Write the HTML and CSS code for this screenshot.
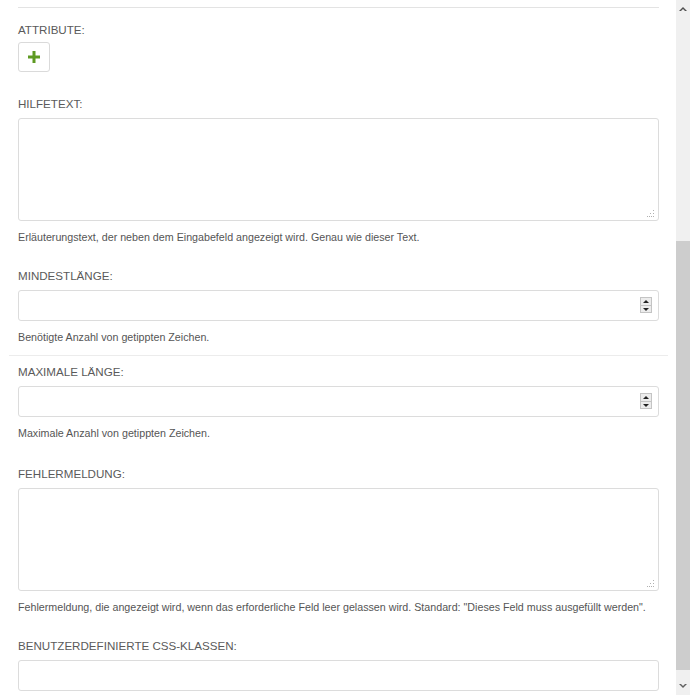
FILE: index.html
```html
<!DOCTYPE html>
<html lang="de">
<head>
<meta charset="utf-8">
<title>Feld-Einstellungen</title>
<link rel="stylesheet" href="styles.css">
</head>
<body>
<div class="page">
  <div class="form">
    <hr class="rule-top">
    <div class="field field-attr">
      <label class="lbl lbl-tight">ATTRIBUTE:</label>
      <button class="add-btn" type="button" aria-label="Hinzufügen">
        <svg width="12" height="12" viewBox="0 0 12 12"><path d="M4.5 0h3v4.5H12v3H7.5V12h-3V7.5H0v-3h4.5z" fill="#5e9a22"/></svg>
      </button>
    </div>
    <div class="field">
      <label class="lbl">HILFETEXT:</label>
      <div class="ctl-wrap">
        <textarea class="ctl area"></textarea>
        <svg class="grip" width="8" height="8" viewBox="0 0 8 8"><g fill="#b0b0b0"><rect x="6" y="0" width="1" height="1"/><rect x="6" y="3" width="1" height="1"/><rect x="3" y="3" width="1" height="1"/><rect x="0" y="6" width="1" height="1"/><rect x="2" y="6" width="1" height="1"/><rect x="4" y="6" width="1" height="1"/><rect x="6" y="6" width="1" height="1"/></g></svg>
      </div>
      <p class="help">Erläuterungstext, der neben dem Eingabefeld angezeigt wird. Genau wie dieser Text.</p>
    </div>
    <div class="field field-last">
      <label class="lbl">MINDESTLÄNGE:</label>
      <div class="ctl-wrap">
        <input class="ctl inp" type="text">
        <span class="spin"><span class="spin-up"></span><span class="spin-dn"></span></span>
      </div>
      <p class="help">Benötigte Anzahl von getippten Zeichen.</p>
    </div>
    <hr class="rule-mid">
    <div class="field field-loose">
      <label class="lbl">MAXIMALE LÄNGE:</label>
      <div class="ctl-wrap">
        <input class="ctl inp" type="text">
        <span class="spin"><span class="spin-up"></span><span class="spin-dn"></span></span>
      </div>
      <p class="help">Maximale Anzahl von getippten Zeichen.</p>
    </div>
    <div class="field">
      <label class="lbl">FEHLERMELDUNG:</label>
      <div class="ctl-wrap">
        <textarea class="ctl area"></textarea>
        <svg class="grip" width="8" height="8" viewBox="0 0 8 8"><g fill="#b0b0b0"><rect x="6" y="0" width="1" height="1"/><rect x="6" y="3" width="1" height="1"/><rect x="3" y="3" width="1" height="1"/><rect x="0" y="6" width="1" height="1"/><rect x="2" y="6" width="1" height="1"/><rect x="4" y="6" width="1" height="1"/><rect x="6" y="6" width="1" height="1"/></g></svg>
      </div>
      <p class="help">Fehlermeldung, die angezeigt wird, wenn das erforderliche Feld leer gelassen wird. Standard: "Dieses Feld muss ausgefüllt werden".</p>
    </div>
    <div class="field">
      <label class="lbl">BENUTZERDEFINIERTE CSS-KLASSEN:</label>
      <div class="ctl-wrap">
        <input class="ctl inp" type="text">
      </div>
    </div>
  </div>
  <div class="scrollbar">
    <div class="sb-btn sb-up"><svg width="8" height="5" viewBox="0 0 8 5"><path d="M0 5L4 1 8 5H6L4 3 2 5z" fill="#505050"/></svg></div>
    <div class="sb-track"><div class="sb-thumb"></div></div>
    <div class="sb-btn sb-dn"><svg width="8" height="5" viewBox="0 0 8 5"><path d="M0 0L4 4 8 0H6L4 2 2 0z" fill="#606060"/></svg></div>
  </div>
</div>
</body>
</html>
```

FILE: styles.css
```css
html, body {
  margin: 0;
  padding: 0;
  background: #fff;
  overflow: hidden;
}
body {
  font-family: "Liberation Sans", Arial, sans-serif;
  color: #555;
}
.page {
  width: 690px;
  height: 695px;
  position: relative;
  overflow: hidden;
}
.form {
  width: 641px;
  margin-left: 18px;
  padding-top: 7px;
}
.rule-top {
  margin: 0 0 15px 0;
  border: 0;
  border-top: 1px solid #e3e3e3;
  height: 0;
}
.rule-mid {
  margin: 0 -9px 9px -9px;
  border: 0;
  border-top: 1px solid #ececec;
  height: 0;
}
.field {
  margin-bottom: 24px;
}
.field-attr {
  margin-bottom: 25px;
}
.field-loose {
  margin-bottom: 26px;
}
.field-last {
  margin-bottom: 10px;
}
.lbl {
  display: block;
  font-size: 11.6px;
  line-height: 14px;
  color: #5a5a5a;
  margin-bottom: 7px;
}
.lbl-tight {
  margin-bottom: 5px;
}
.add-btn {
  display: flex;
  align-items: center;
  justify-content: center;
  width: 32px;
  height: 30px;
  padding: 0;
  background: #fff;
  border: 1px solid #dadada;
  border-radius: 3px;
}
.ctl-wrap {
  position: relative;
}
.ctl {
  display: block;
  box-sizing: border-box;
  width: 641px;
  margin: 0;
  border: 1px solid #dcdcdc;
  border-radius: 3px;
  background: #fff;
  font-family: "Liberation Sans", Arial, sans-serif;
  font-size: 12px;
  outline: none;
}
.inp {
  height: 31px;
  padding: 0 8px;
}
.area {
  height: 103px;
  resize: none;
  padding: 6px 8px;
}
.grip {
  position: absolute;
  right: 4px;
  bottom: 3px;
}
.spin {
  position: absolute;
  right: 7px;
  top: 7px;
  width: 12px;
  height: 16px;
  display: flex;
  flex-direction: column;
  box-sizing: border-box;
  border: 1px solid #c4c4c4;
  background: #ececec;
}
.spin-up, .spin-dn {
  flex: 1;
  position: relative;
}
.spin-up {
  border-bottom: 1px solid #c4c4c4;
}
.spin-up::after, .spin-dn::after {
  content: "";
  position: absolute;
  left: 2px;
  width: 0;
  height: 0;
  border-left: 3px solid transparent;
  border-right: 3px solid transparent;
}
.spin-up::after {
  top: 2px;
  border-bottom: 3px solid #222;
}
.spin-dn::after {
  top: 2px;
  border-top: 3px solid #222;
}
.help {
  margin: 9px 0 0 0;
  font-size: 10.7px;
  line-height: 15px;
  color: #555;
  white-space: nowrap;
}
.scrollbar {
  position: absolute;
  top: 0;
  right: 0;
  width: 14px;
  height: 695px;
  background: #f0f0f0;
  display: flex;
  flex-direction: column;
}
.sb-btn {
  height: 17px;
  display: flex;
  align-items: center;
  justify-content: center;
}
.sb-track {
  flex: 1;
  position: relative;
}
.sb-thumb {
  position: absolute;
  left: 0;
  right: 0;
  top: 224px;
  bottom: 8px;
  background: #cdcdcd;
}
```
